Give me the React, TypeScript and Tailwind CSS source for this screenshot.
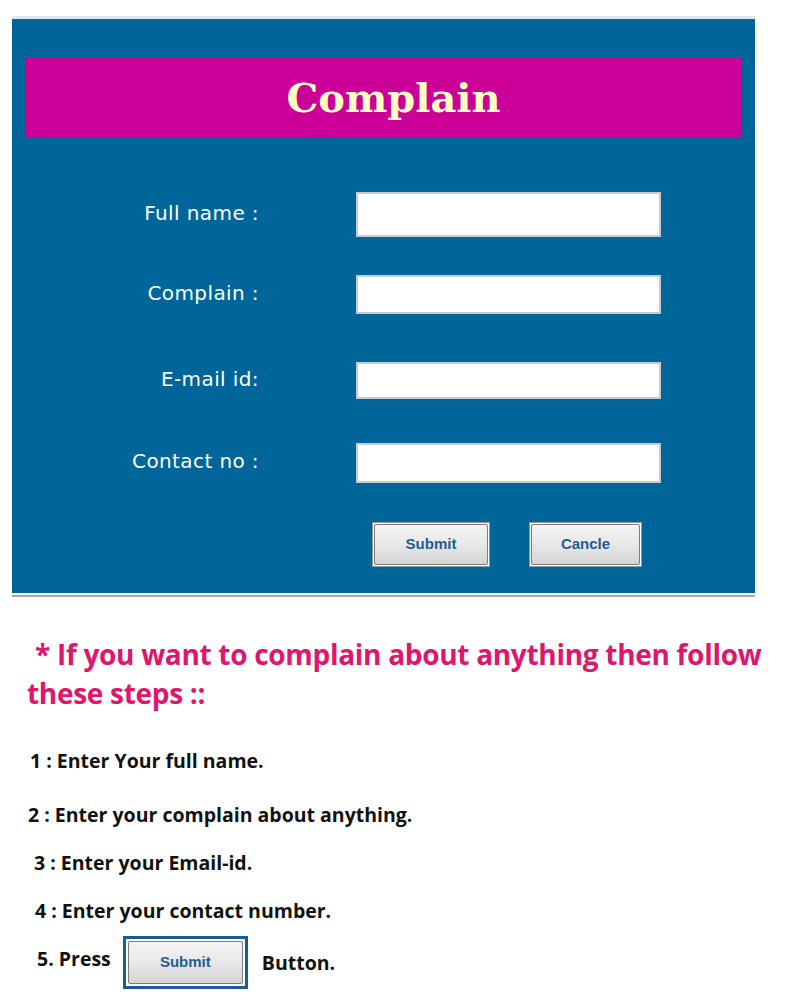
import React from "react";

const rows = [
  { label: "Full name :", row: "mt-[55px]", input: "h-[45px]" },
  { label: "Complain :", row: "mt-[38px]", input: "h-[39px]" },
  { label: "E-mail id:", row: "mt-[48px]", input: "h-[37px]" },
  { label: "Contact no :", row: "mt-[44px]", input: "h-[40px]" },
];

function GrayButton({ label, w }: { label: string; w: string }) {
  return (
    <div className={`${w} h-[45px] border border-[#9a9a9a] bg-white p-px`}>
      <div className="flex h-full w-full items-center justify-center rounded-[2px] border border-[#7d7d7d] bg-gradient-to-b from-[#f4f4f4] via-[#e8e8e8] to-[#d4d4d4] text-[15px] font-bold text-[#1f5d93] [font-family:'Liberation_Sans',Arial,sans-serif]">
        {label}
      </div>
    </div>
  );
}

export default function App() {
  return (
    <div className="min-h-[1004px] w-[800px] bg-white">
      <div className="pt-[16px] pl-[12px]">
        <div className="w-[743px] border-t-[3px] border-[#dfe7f1]">
          <div className="h-[574px] w-[743px] border-l border-r border-[#0a5f90] bg-[#006699] pt-[38px]">
            <div className="mx-[13px] flex h-[80px] items-center justify-center bg-[#cc0099] pl-[20px]">
              <span className="pt-[2px] text-[40px] font-bold text-[#ffffc2] [font-family:'DejaVu_Serif',serif]">
                Complain
              </span>
            </div>
            {rows.map((r) => (
              <div key={r.label} className={`${r.row} flex items-center`}>
                <div className="w-[246px] pb-[4px] text-right text-[20px] text-white [font-family:'DejaVu_Sans',sans-serif] tracking-[0.4px]">
                  {r.label}
                </div>
                <div className={`${r.input} ml-[97px] w-[305px] border-2 border-[#c6cbd2] bg-white`} />
              </div>
            ))}
            <div className="mt-[39px] flex pl-[359px]">
              <GrayButton label="Submit" w="w-[118px]" />
              <div className="ml-[39px]">
                <GrayButton label="Cancle" w="w-[113px]" />
              </div>
            </div>
          </div>
          <div className="h-[2px] bg-white" />
          <div className="h-[2px] bg-[#a8a8a8]" />
        </div>
      </div>

      <div className="mt-[38px] pl-[27px] text-[28px] font-bold leading-[39px] text-[#e0156c] [font-family:'Open_Sans',sans-serif] tracking-[-0.3px]">
        <div className="pl-[8px]">* If you want to complain about anything then follow</div>
        <div>these steps ::</div>
      </div>

      <div className="text-[19.5px] font-bold text-[#111] [font-family:'Open_Sans',sans-serif]">
        <div className="mt-[36px] pl-[30px] leading-[24px]">1 : Enter Your full name.</div>
        <div className="mt-[30px] pl-[28px] leading-[24px]">2 : Enter your complain about anything.</div>
        <div className="mt-[24px] pl-[34px] leading-[24px]">3 : Enter your Email-id.</div>
        <div className="mt-[24px] pl-[35px] leading-[24px]">4 : Enter your contact number.</div>
        <div className="mt-[13px] flex items-center pl-[37px]">
          <span className="pb-[8px]">5. Press</span>
          <div className="ml-[12px] h-[53px] w-[125px] border-[3px] border-[#1a5d8f] bg-white p-[2px]">
            <div className="flex h-full w-full items-center justify-center rounded-[2px] border border-[#7d7d7d] bg-gradient-to-b from-[#f4f4f4] via-[#e8e8e8] to-[#d4d4d4] text-[15px] font-bold text-[#1f5d93] [font-family:'Liberation_Sans',Arial,sans-serif]">
              Submit
            </div>
          </div>
          <span className="ml-[14px]">Button.</span>
        </div>
      </div>
    </div>
  );
}
